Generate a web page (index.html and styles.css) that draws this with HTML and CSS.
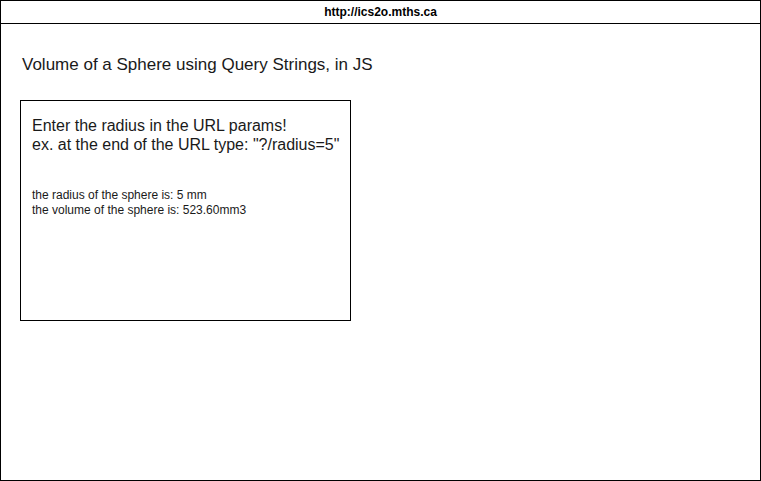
FILE: index.html
```html
<!DOCTYPE html>
<html>
<head>
<meta charset="utf-8">
<link rel="stylesheet" href="styles.css">
</head>
<body>
<div class="frame">
  <div class="urlbar">http://ics2o.mths.ca</div>
  <h1 class="title">Volume of a Sphere using Query Strings, in JS</h1>
  <div class="card">
    <p class="intro">Enter the radius in the URL params!<br>ex. at the end of the URL type: "?/radius=5"</p>
    <p class="result">the radius of the sphere is: 5 mm<br>the volume of the sphere is: 523.60mm3</p>
  </div>
</div>
</body>
</html>
```
FILE: styles.css
```css
html, body {
  margin: 0;
  padding: 0;
  background: #fff;
}
.frame {
  width: 761px;
  height: 481px;
  box-sizing: border-box;
  border: 1px solid #000;
  font-family: "Liberation Sans", Arial, sans-serif;
  color: #1a1a1a;
}
.urlbar {
  height: 22px;
  border-bottom: 1px solid #000;
  font-size: 12px;
  font-weight: bold;
  line-height: 22px;
  text-align: center;
  color: #000;
}
.title {
  margin: 32px 0 0 21px;
  font-size: 17px;
  font-weight: normal;
  line-height: 18px;
}
.card {
  margin: 26px 0 0 19px;
  width: 331px;
  height: 221px;
  box-sizing: border-box;
  border: 1px solid #000;
  padding: 15px 11px;
}
.intro {
  margin: 0;
  font-size: 16px;
  line-height: 19px;
  white-space: nowrap;
}
.result {
  margin: 34px 0 0;
  font-size: 12px;
  line-height: 15px;
  white-space: nowrap;
}
```
